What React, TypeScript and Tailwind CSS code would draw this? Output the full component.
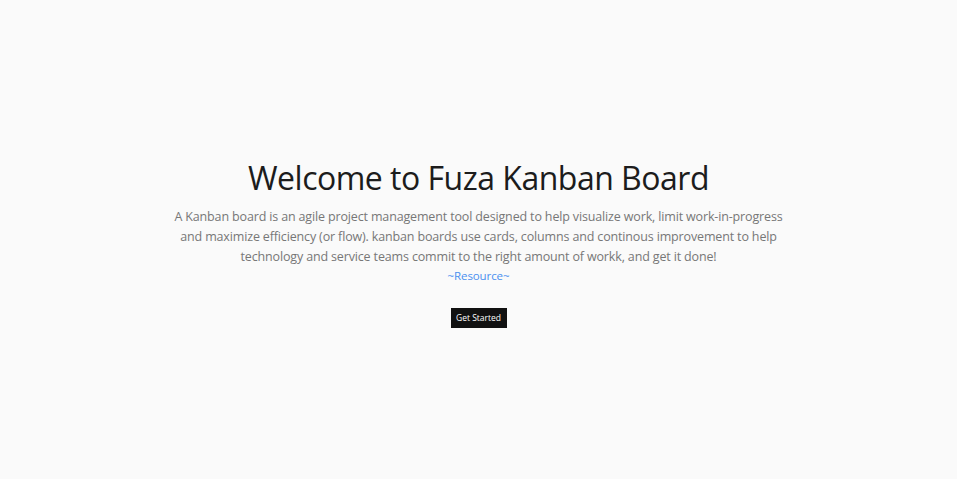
import React from 'react';

const App = () => {
  return (
    <div className="min-h-screen bg-[#fafafa] flex flex-col items-center pt-[157px] text-center" style={{ fontFamily: '"Open Sans", "Noto Sans", sans-serif' }}>
      <h1 className="text-[32px] leading-[42px] font-medium tracking-[-0.5px] text-[#1c1c1c]">Welcome to Fuza Kanban Board</h1>
      <p className="mt-[8px] text-[12.5px] leading-[20px] tracking-[-0.15px] text-[#777]">
        A Kanban board is an agile project management tool designed to help visualize work, limit work-in-progress
        <br />
        and maximize efficiency (or flow). kanban boards use cards, columns and continous improvement to help
        <br />
        technology and service teams commit to the right amount of workk, and get it done!
      </p>
      <a className="text-[11.5px] leading-[18px] tracking-[-0.1px] text-[#4a90f0]">~Resource~</a>
      <button className="mt-[23px] bg-[#111] text-white text-[8.5px] h-[20px] w-[56px]">Get Started</button>
    </div>
  );
};

export default App;
